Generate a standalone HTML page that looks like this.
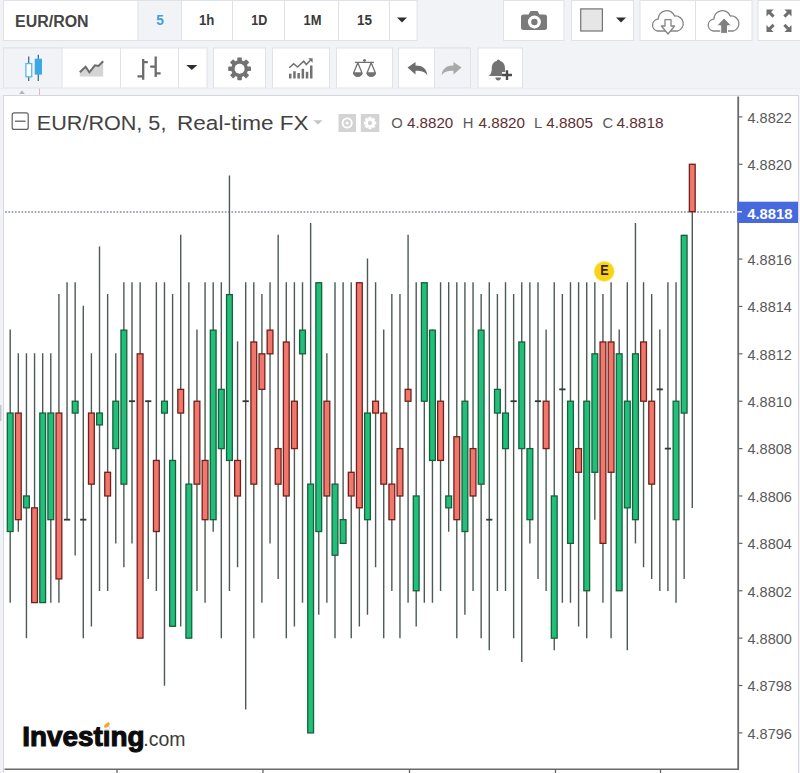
<!DOCTYPE html>
<html><head><meta charset="utf-8"><title>EUR/RON chart</title>
<style>
html,body{margin:0;padding:0;background:#f1f3f7;}
body{width:800px;height:773px;overflow:hidden;}
svg{display:block;}
text{font-family:"Liberation Sans",sans-serif;}
.ax{font-size:14.5px;fill:#595959;}
.tb{font-size:14.5px;font-weight:bold;fill:#3a3a3a;}
</style></head><body>
<svg width="800" height="773" viewBox="0 0 800 773">
<rect x="0" y="0" width="800" height="773" fill="#f1f3f7"/>

<!-- ===== toolbar row 1 ===== -->
<g stroke="#dfe2e9" stroke-width="1" fill="#fff">
<rect x="3.5" y="0.500" width="413.500" height="40"/>
<rect x="138" y="0.500" width="43.500" height="40" fill="#f1f3f7"/>
<line x1="232.5" y1="0" x2="232.5" y2="40"/>
<line x1="284.5" y1="0" x2="284.5" y2="40"/>
<line x1="338.5" y1="0" x2="338.5" y2="40"/>
<line x1="389.5" y1="0" x2="389.5" y2="40"/>
<rect x="503.500" y="0.500" width="60.500" height="40"/>
<rect x="571.500" y="0.500" width="62" height="40"/>
<rect x="640" y="0.500" width="112" height="40"/>
<line x1="695.5" y1="0" x2="695.5" y2="40"/>
<rect x="758" y="0.500" width="50" height="40"/>
</g>
<text x="15" y="26.800" font-size="16" font-weight="bold" fill="#454545" textLength="73.600" lengthAdjust="spacingAndGlyphs">EUR/RON</text>
<text x="156.3" y="24.6" class="tb" style="fill:#3fa0d6" textLength="7.6" lengthAdjust="spacingAndGlyphs">5</text>
<text x="199" y="24.6" class="tb" textLength="15.4" lengthAdjust="spacingAndGlyphs">1h</text>
<text x="251.2" y="24.6" class="tb" textLength="16" lengthAdjust="spacingAndGlyphs">1D</text>
<text x="303.5" y="24.6" class="tb" textLength="18" lengthAdjust="spacingAndGlyphs">1M</text>
<text x="356.9" y="24.6" class="tb" textLength="15" lengthAdjust="spacingAndGlyphs">15</text>
<path d="M397 17.5h10l-5 5z" fill="#2e2e2e"/>

<!-- camera -->
<g fill="#7a7a7a">
<path d="M523.5 14.5h5l2-3.5h7l2 3.5h5a2.5 2.5 0 0 1 2.5 2.5v10.5a2.5 2.5 0 0 1-2.5 2.5h-21a2.5 2.5 0 0 1-2.5-2.5V17a2.5 2.5 0 0 1 2.5-2.5z"/>
<circle cx="534.400" cy="22" r="6.500" fill="#fff"/>
<circle cx="534.400" cy="22" r="3.200"/>
</g>
<!-- colour square + arrow -->
<rect x="580.700" y="8.900" width="21.700" height="22.100" fill="#e6e6e6" stroke="#747474" stroke-width="1.200"/>
<path d="M616 17.5h10l-5 5z" fill="#2e2e2e"/>
<!-- cloud download -->
<g fill="none" stroke="#858585" stroke-width="1.300" stroke-linejoin="round">
<path d="M657.500 31A6 6 0 0 1 658.200 19.100A8.500 8.500 0 0 1 674.600 16A7.700 7.700 0 0 1 677.800 31z"/>
<path d="M665 19.600h6v6.400h3.600l-6.600 8l-6.600-8h3.600z" fill="#fff"/>
</g>
<!-- cloud upload -->
<g fill="none" stroke="#858585" stroke-width="1.300" stroke-linejoin="round" transform="translate(55.700 0)">
<path d="M657.500 31A6 6 0 0 1 658.200 19.100A8.500 8.500 0 0 1 674.600 16A7.700 7.700 0 0 1 677.800 31z"/>
<path d="M665 33.400v-7.600h-4l7.400-7.800l7.400 7.800h-4v7.600z" fill="#808080" stroke="#fff" stroke-width="1"/>
</g>
<!-- fullscreen arrows -->
<g fill="#6f6f6f">
<path d="M766.5 9.5h7l-2.4 2.4l3.6 3.6l-2.2 2.2l-3.6-3.6l-2.4 2.4z"/>
<path d="M791.5 9.5v7l-2.4-2.4l-3.6 3.6l-2.2-2.2l3.6-3.6l-2.4-2.4z"/>
<path d="M766.5 32v-7l2.4 2.4l3.6-3.6l2.2 2.2l-3.6 3.6l2.4 2.4z"/>
<path d="M791.5 32h-7l2.4-2.4l-3.6-3.6l2.2-2.2l3.6 3.6l2.4-2.4z"/>
</g>

<!-- ===== toolbar row 2 ===== -->
<g stroke="#dfe2e9" stroke-width="1" fill="#fff">
<rect x="3.5" y="48" width="203.5" height="40"/>
<rect x="3.5" y="48" width="58.5" height="40" fill="#f1f3f7"/>
<line x1="120.5" y1="48" x2="120.5" y2="88"/>
<line x1="178.5" y1="48" x2="178.5" y2="88"/>
<rect x="213.5" y="48" width="52" height="40"/>
<rect x="272.5" y="48" width="57" height="40"/>
<rect x="336.5" y="48" width="56" height="40"/>
<rect x="398.5" y="48" width="72" height="40"/>
<rect x="434.5" y="48" width="36" height="40" fill="#f1f3f7"/>
<rect x="478" y="48" width="44.5" height="40"/>
</g>
<!-- candle icon -->
<g stroke-width="1.300">
<line x1="28.700" y1="56.400" x2="28.700" y2="81" stroke="#3f6f8e"/>
<rect x="25.900" y="63.600" width="5.800" height="13.200" fill="#fff" stroke="#5bb8ea"/>
<line x1="38.300" y1="54.800" x2="38.300" y2="80.900" stroke="#3f6f8e"/>
<rect x="35.400" y="59.400" width="5.900" height="14.600" fill="#38a9e6" stroke="#38a9e6"/>
</g>
<!-- area/line icon -->
<path d="M79.800 76.600v-4.400l5.800-5.500l3.800 5.700l5.500-7.100l3.600 0.700l4.700-4.800v15.400z" fill="#d4d4d4"/>
<path d="M79.800 72.200l5.800-5.500l3.800 5.700l5.500-7.100l3.600 0.700l4.700-4.800" fill="none" stroke="#6b6b6b" stroke-width="2"/>
<!-- bars icon -->
<g stroke="#6b6b6b" stroke-width="2.300" fill="none">
<path d="M143.200 59.100v20.700M137.500 76.300h5.700M143.200 62.200h4.600"/>
<path d="M155.700 56.400v20.600M150.200 66.700h5.500M155.700 73.300h4.900"/>
</g>
<path d="M186.300 65h11l-5.500 5.100z" fill="#2e2e2e"/>
<!-- gear -->
<g transform="translate(239.600 68.800)">
<g fill="#727272">
<rect x="-2.300" y="-11.400" width="4.600" height="22.800" rx="0.800"/>
<rect x="-2.300" y="-11.400" width="4.600" height="22.800" rx="0.800" transform="rotate(45)"/>
<rect x="-2.300" y="-11.400" width="4.600" height="22.800" rx="0.800" transform="rotate(90)"/>
<rect x="-2.300" y="-11.400" width="4.600" height="22.800" rx="0.800" transform="rotate(135)"/>
<circle r="8.500"/>
</g>
<circle r="5" fill="#fff"/>
</g>
<!-- indicators -->
<g fill="#727272">
<rect x="289" y="73.700" width="2.500" height="4.800"/>
<rect x="293.200" y="71.200" width="2.500" height="7.300"/>
<rect x="297.400" y="73" width="2.500" height="5.500"/>
<rect x="301.600" y="68.800" width="2.500" height="9.700"/>
<rect x="305.800" y="71.800" width="2.500" height="6.700"/>
<rect x="310" y="65.500" width="2.500" height="13"/>
</g>
<path d="M289.300 67.700l4.400-4l3.800 3.300l6.200-5.800l2.600 3.300l4.600-4.800" fill="none" stroke="#727272" stroke-width="1.500"/>
<path d="M308.200 58.200h4.400v4.600z" fill="#727272"/>
<!-- scales -->
<g fill="none" stroke="#727272" stroke-width="1.300">
<path d="M355 62.400h19M364.500 60v2.400"/>
<path d="M357.800 62.800l-4.200 10.200h8.400zM371.200 62.800l-4.200 10.200h8.400z" stroke-linejoin="round"/>
</g>
<path d="M353 73h9.600a4.800 4 0 0 1-9.600 0zM366.400 73h9.600a4.800 4 0 0 1-9.600 0z" fill="#727272"/>
<circle cx="364.500" cy="60.300" r="1.400" fill="#727272"/>
<!-- undo / redo -->
<path d="M407.5 67.5l8-5.5v3.6c7 0 11.2 3.2 11.8 9.6c-2.6-3.4-6-4.5-11.8-4.4v3.7z" fill="#6d6d6d"/>
<path d="M461.5 67.5l-8-5.5v3.6c-7 0-11.2 3.2-11.8 9.6c2.600-3.400 6-4.500 11.800-4.400v3.700z" fill="#a9a9a9"/>
<!-- alert bell -->
<g fill="#737373">
<path d="M488.600 76c2.400-1.800 3.200-4.200 3.200-7.600c0-4.400 2.200-6.800 5-7.400a1.600 1.600 0 0 1 3.200 0c2.800 0.600 5 3 5 7.400c0 1.600 0.100 2.600 0.400 3.600h-3.400v4z"/>
<path d="M495.400 77.600h5.600a2.800 2.800 0 0 1-5.600 0z"/>
<path d="M505.800 70.200h2.400v3.600h3.800v2.400h-3.800v3.800h-2.400v-3.800h-3.800v-2.400h3.800z" fill="#4c4c4c"/>
</g>

<!-- ===== chart pane ===== -->
<rect x="3.500" y="95.500" width="795" height="690" fill="#fff" stroke="#d5d7dc" stroke-width="1"/>
<rect x="0" y="88.800" width="800" height="6.200" fill="#f4f5f9"/>
<line x1="0" y1="88.700" x2="800" y2="88.700" stroke="#eaecf0" stroke-width="1"/>
<path d="M19.200 94l2.800-3.800l2.800 3.800z" fill="#b4b6bb"/>
<line x1="39.500" y1="88.500" x2="39.500" y2="95" stroke="#e9b7bd" stroke-width="1"/>

<rect x="0" y="405" width="1.500" height="16" fill="#c4c6cb"/>
<!-- last price dotted line -->
<line x1="5.100" y1="211.900" x2="736" y2="211.900" stroke="#868b9c" stroke-width="1.500" stroke-dasharray="1.700 1.580"/>

<!-- candles -->
<line x1="10.20" y1="329.54" x2="10.20" y2="602.79" stroke="#4c5a53" stroke-width="1.4"/>
<rect x="7.30" y="413.06" width="5.80" height="118.46" fill="#22bf7b" stroke="#17603d" stroke-width="1.3"/>
<line x1="18.32" y1="353.23" x2="18.32" y2="531.72" stroke="#4c5a53" stroke-width="1.4"/>
<rect x="15.42" y="413.06" width="5.80" height="106.61" fill="#f1766c" stroke="#6e221b" stroke-width="1.3"/>
<line x1="26.44" y1="353.23" x2="26.44" y2="638.33" stroke="#4c5a53" stroke-width="1.4"/>
<rect x="23.54" y="495.98" width="5.80" height="11.85" fill="#22bf7b" stroke="#17603d" stroke-width="1.3"/>
<line x1="34.56" y1="353.23" x2="34.56" y2="602.79" stroke="#4c5a53" stroke-width="1.4"/>
<rect x="31.66" y="507.83" width="5.80" height="94.77" fill="#f1766c" stroke="#6e221b" stroke-width="1.3"/>
<line x1="42.68" y1="353.23" x2="42.68" y2="602.79" stroke="#4c5a53" stroke-width="1.4"/>
<rect x="39.78" y="413.06" width="5.80" height="189.54" fill="#22bf7b" stroke="#17603d" stroke-width="1.3"/>
<line x1="50.80" y1="353.23" x2="50.80" y2="602.79" stroke="#4c5a53" stroke-width="1.4"/>
<rect x="47.90" y="413.06" width="5.80" height="106.61" fill="#22bf7b" stroke="#17603d" stroke-width="1.3"/>
<line x1="58.92" y1="294.00" x2="58.92" y2="602.79" stroke="#4c5a53" stroke-width="1.4"/>
<rect x="56.02" y="413.06" width="5.80" height="165.84" fill="#f1766c" stroke="#6e221b" stroke-width="1.3"/>
<line x1="67.04" y1="282.15" x2="67.04" y2="519.87" stroke="#4c5a53" stroke-width="1.4"/>
<line x1="63.94" y1="519.67" x2="70.14" y2="519.67" stroke="#2f3a34" stroke-width="1.8"/>
<line x1="75.16" y1="282.15" x2="75.16" y2="555.41" stroke="#4c5a53" stroke-width="1.4"/>
<rect x="72.26" y="401.21" width="5.80" height="11.85" fill="#22bf7b" stroke="#17603d" stroke-width="1.3"/>
<line x1="83.28" y1="305.84" x2="83.28" y2="638.33" stroke="#4c5a53" stroke-width="1.4"/>
<line x1="80.18" y1="519.67" x2="86.38" y2="519.67" stroke="#2f3a34" stroke-width="1.8"/>
<line x1="91.40" y1="353.23" x2="91.40" y2="626.49" stroke="#4c5a53" stroke-width="1.4"/>
<rect x="88.50" y="413.06" width="5.80" height="71.08" fill="#f1766c" stroke="#6e221b" stroke-width="1.3"/>
<line x1="99.52" y1="246.61" x2="99.52" y2="590.95" stroke="#4c5a53" stroke-width="1.4"/>
<rect x="96.62" y="413.06" width="5.80" height="11.85" fill="#22bf7b" stroke="#17603d" stroke-width="1.3"/>
<line x1="107.64" y1="294.00" x2="107.64" y2="590.95" stroke="#4c5a53" stroke-width="1.4"/>
<rect x="104.74" y="472.29" width="5.80" height="23.69" fill="#f1766c" stroke="#6e221b" stroke-width="1.3"/>
<line x1="115.76" y1="353.23" x2="115.76" y2="543.56" stroke="#4c5a53" stroke-width="1.4"/>
<rect x="112.86" y="401.21" width="5.80" height="47.38" fill="#22bf7b" stroke="#17603d" stroke-width="1.3"/>
<line x1="123.88" y1="282.15" x2="123.88" y2="567.26" stroke="#4c5a53" stroke-width="1.4"/>
<rect x="120.98" y="330.14" width="5.80" height="154.00" fill="#22bf7b" stroke="#17603d" stroke-width="1.3"/>
<line x1="132.00" y1="282.15" x2="132.00" y2="543.56" stroke="#4c5a53" stroke-width="1.4"/>
<line x1="128.90" y1="401.21" x2="135.10" y2="401.21" stroke="#2f3a34" stroke-width="1.8"/>
<line x1="140.12" y1="282.15" x2="140.12" y2="638.33" stroke="#4c5a53" stroke-width="1.4"/>
<rect x="137.22" y="353.83" width="5.80" height="284.30" fill="#f1766c" stroke="#6e221b" stroke-width="1.3"/>
<line x1="148.24" y1="400.61" x2="148.24" y2="579.10" stroke="#4c5a53" stroke-width="1.4"/>
<line x1="145.14" y1="401.21" x2="151.34" y2="401.21" stroke="#2f3a34" stroke-width="1.8"/>
<line x1="156.36" y1="282.15" x2="156.36" y2="590.95" stroke="#4c5a53" stroke-width="1.4"/>
<rect x="153.46" y="460.44" width="5.80" height="71.08" fill="#f1766c" stroke="#6e221b" stroke-width="1.3"/>
<line x1="164.48" y1="282.15" x2="164.48" y2="685.72" stroke="#4c5a53" stroke-width="1.4"/>
<rect x="161.58" y="401.21" width="5.80" height="11.85" fill="#22bf7b" stroke="#17603d" stroke-width="1.3"/>
<line x1="172.60" y1="294.00" x2="172.60" y2="626.49" stroke="#4c5a53" stroke-width="1.4"/>
<rect x="169.70" y="460.44" width="5.80" height="165.84" fill="#22bf7b" stroke="#17603d" stroke-width="1.3"/>
<line x1="180.72" y1="234.77" x2="180.72" y2="626.49" stroke="#4c5a53" stroke-width="1.4"/>
<rect x="177.82" y="389.37" width="5.80" height="23.69" fill="#f1766c" stroke="#6e221b" stroke-width="1.3"/>
<line x1="188.84" y1="282.15" x2="188.84" y2="638.33" stroke="#4c5a53" stroke-width="1.4"/>
<rect x="185.94" y="484.13" width="5.80" height="154.00" fill="#22bf7b" stroke="#17603d" stroke-width="1.3"/>
<line x1="196.96" y1="329.54" x2="196.96" y2="590.95" stroke="#4c5a53" stroke-width="1.4"/>
<rect x="194.06" y="401.21" width="5.80" height="82.92" fill="#f1766c" stroke="#6e221b" stroke-width="1.3"/>
<line x1="205.08" y1="282.15" x2="205.08" y2="602.79" stroke="#4c5a53" stroke-width="1.4"/>
<rect x="202.18" y="460.44" width="5.80" height="59.23" fill="#f1766c" stroke="#6e221b" stroke-width="1.3"/>
<line x1="213.20" y1="282.15" x2="213.20" y2="531.72" stroke="#4c5a53" stroke-width="1.4"/>
<rect x="210.30" y="330.14" width="5.80" height="189.54" fill="#22bf7b" stroke="#17603d" stroke-width="1.3"/>
<line x1="221.32" y1="282.15" x2="221.32" y2="638.33" stroke="#4c5a53" stroke-width="1.4"/>
<rect x="218.42" y="389.37" width="5.80" height="59.23" fill="#22bf7b" stroke="#17603d" stroke-width="1.3"/>
<line x1="229.44" y1="175.54" x2="229.44" y2="590.95" stroke="#4c5a53" stroke-width="1.4"/>
<rect x="226.54" y="294.60" width="5.80" height="165.84" fill="#22bf7b" stroke="#17603d" stroke-width="1.3"/>
<line x1="237.56" y1="341.38" x2="237.56" y2="567.26" stroke="#4c5a53" stroke-width="1.4"/>
<rect x="234.66" y="460.44" width="5.80" height="35.54" fill="#f1766c" stroke="#6e221b" stroke-width="1.3"/>
<line x1="245.68" y1="282.15" x2="245.68" y2="709.41" stroke="#4c5a53" stroke-width="1.4"/>
<line x1="242.58" y1="401.21" x2="248.78" y2="401.21" stroke="#2f3a34" stroke-width="1.8"/>
<line x1="253.80" y1="282.15" x2="253.80" y2="638.33" stroke="#4c5a53" stroke-width="1.4"/>
<rect x="250.90" y="341.98" width="5.80" height="142.15" fill="#f1766c" stroke="#6e221b" stroke-width="1.3"/>
<line x1="261.92" y1="294.00" x2="261.92" y2="602.79" stroke="#4c5a53" stroke-width="1.4"/>
<rect x="259.02" y="353.83" width="5.80" height="35.54" fill="#f1766c" stroke="#6e221b" stroke-width="1.3"/>
<line x1="270.04" y1="282.15" x2="270.04" y2="543.56" stroke="#4c5a53" stroke-width="1.4"/>
<rect x="267.14" y="330.14" width="5.80" height="23.69" fill="#f1766c" stroke="#6e221b" stroke-width="1.3"/>
<line x1="278.16" y1="234.77" x2="278.16" y2="579.10" stroke="#4c5a53" stroke-width="1.4"/>
<rect x="275.26" y="448.60" width="5.80" height="35.54" fill="#f1766c" stroke="#6e221b" stroke-width="1.3"/>
<line x1="286.28" y1="282.15" x2="286.28" y2="638.33" stroke="#4c5a53" stroke-width="1.4"/>
<rect x="283.38" y="341.98" width="5.80" height="154.00" fill="#f1766c" stroke="#6e221b" stroke-width="1.3"/>
<line x1="294.40" y1="282.15" x2="294.40" y2="626.49" stroke="#4c5a53" stroke-width="1.4"/>
<rect x="291.50" y="401.21" width="5.80" height="47.38" fill="#f1766c" stroke="#6e221b" stroke-width="1.3"/>
<line x1="302.52" y1="282.15" x2="302.52" y2="602.79" stroke="#4c5a53" stroke-width="1.4"/>
<rect x="299.62" y="330.14" width="5.80" height="23.69" fill="#22bf7b" stroke="#17603d" stroke-width="1.3"/>
<line x1="310.64" y1="222.92" x2="310.64" y2="733.10" stroke="#4c5a53" stroke-width="1.4"/>
<rect x="307.74" y="484.13" width="5.80" height="248.77" fill="#22bf7b" stroke="#17603d" stroke-width="1.3"/>
<line x1="318.76" y1="282.15" x2="318.76" y2="614.64" stroke="#4c5a53" stroke-width="1.4"/>
<rect x="315.86" y="282.75" width="5.80" height="248.77" fill="#22bf7b" stroke="#17603d" stroke-width="1.3"/>
<line x1="326.88" y1="353.23" x2="326.88" y2="602.79" stroke="#4c5a53" stroke-width="1.4"/>
<rect x="323.98" y="401.21" width="5.80" height="94.77" fill="#f1766c" stroke="#6e221b" stroke-width="1.3"/>
<line x1="335.00" y1="282.15" x2="335.00" y2="638.33" stroke="#4c5a53" stroke-width="1.4"/>
<rect x="332.10" y="484.13" width="5.80" height="71.08" fill="#22bf7b" stroke="#17603d" stroke-width="1.3"/>
<line x1="343.12" y1="282.15" x2="343.12" y2="543.56" stroke="#4c5a53" stroke-width="1.4"/>
<rect x="340.22" y="519.67" width="5.80" height="23.69" fill="#22bf7b" stroke="#17603d" stroke-width="1.3"/>
<line x1="351.24" y1="282.15" x2="351.24" y2="638.33" stroke="#4c5a53" stroke-width="1.4"/>
<rect x="348.34" y="472.29" width="5.80" height="23.69" fill="#f1766c" stroke="#6e221b" stroke-width="1.3"/>
<line x1="359.36" y1="282.15" x2="359.36" y2="626.49" stroke="#4c5a53" stroke-width="1.4"/>
<rect x="356.46" y="282.75" width="5.80" height="225.07" fill="#f1766c" stroke="#6e221b" stroke-width="1.3"/>
<line x1="367.48" y1="258.46" x2="367.48" y2="614.64" stroke="#4c5a53" stroke-width="1.4"/>
<rect x="364.58" y="413.06" width="5.80" height="106.61" fill="#22bf7b" stroke="#17603d" stroke-width="1.3"/>
<line x1="375.60" y1="282.15" x2="375.60" y2="567.26" stroke="#4c5a53" stroke-width="1.4"/>
<rect x="372.70" y="401.21" width="5.80" height="11.85" fill="#f1766c" stroke="#6e221b" stroke-width="1.3"/>
<line x1="383.72" y1="329.54" x2="383.72" y2="638.33" stroke="#4c5a53" stroke-width="1.4"/>
<rect x="380.82" y="413.06" width="5.80" height="71.08" fill="#f1766c" stroke="#6e221b" stroke-width="1.3"/>
<line x1="391.84" y1="294.00" x2="391.84" y2="590.95" stroke="#4c5a53" stroke-width="1.4"/>
<rect x="388.94" y="484.13" width="5.80" height="35.54" fill="#f1766c" stroke="#6e221b" stroke-width="1.3"/>
<line x1="399.96" y1="294.00" x2="399.96" y2="638.33" stroke="#4c5a53" stroke-width="1.4"/>
<rect x="397.06" y="448.60" width="5.80" height="47.38" fill="#f1766c" stroke="#6e221b" stroke-width="1.3"/>
<line x1="408.08" y1="234.77" x2="408.08" y2="602.79" stroke="#4c5a53" stroke-width="1.4"/>
<rect x="405.18" y="389.37" width="5.80" height="11.85" fill="#f1766c" stroke="#6e221b" stroke-width="1.3"/>
<line x1="416.20" y1="282.15" x2="416.20" y2="626.49" stroke="#4c5a53" stroke-width="1.4"/>
<rect x="413.30" y="495.98" width="5.80" height="94.77" fill="#22bf7b" stroke="#17603d" stroke-width="1.3"/>
<line x1="424.32" y1="282.15" x2="424.32" y2="602.79" stroke="#4c5a53" stroke-width="1.4"/>
<rect x="421.42" y="282.75" width="5.80" height="118.46" fill="#22bf7b" stroke="#17603d" stroke-width="1.3"/>
<line x1="432.44" y1="329.54" x2="432.44" y2="602.79" stroke="#4c5a53" stroke-width="1.4"/>
<rect x="429.54" y="330.14" width="5.80" height="130.31" fill="#22bf7b" stroke="#17603d" stroke-width="1.3"/>
<line x1="440.56" y1="282.15" x2="440.56" y2="590.95" stroke="#4c5a53" stroke-width="1.4"/>
<rect x="437.66" y="401.21" width="5.80" height="59.23" fill="#f1766c" stroke="#6e221b" stroke-width="1.3"/>
<line x1="448.68" y1="282.15" x2="448.68" y2="531.72" stroke="#4c5a53" stroke-width="1.4"/>
<rect x="445.78" y="495.98" width="5.80" height="11.85" fill="#22bf7b" stroke="#17603d" stroke-width="1.3"/>
<line x1="456.80" y1="282.15" x2="456.80" y2="638.33" stroke="#4c5a53" stroke-width="1.4"/>
<rect x="453.90" y="436.75" width="5.80" height="82.92" fill="#f1766c" stroke="#6e221b" stroke-width="1.3"/>
<line x1="464.92" y1="282.15" x2="464.92" y2="614.64" stroke="#4c5a53" stroke-width="1.4"/>
<rect x="462.02" y="401.21" width="5.80" height="130.31" fill="#22bf7b" stroke="#17603d" stroke-width="1.3"/>
<line x1="473.04" y1="282.15" x2="473.04" y2="590.95" stroke="#4c5a53" stroke-width="1.4"/>
<rect x="470.14" y="448.60" width="5.80" height="47.38" fill="#f1766c" stroke="#6e221b" stroke-width="1.3"/>
<line x1="481.16" y1="294.00" x2="481.16" y2="638.33" stroke="#4c5a53" stroke-width="1.4"/>
<rect x="478.26" y="330.14" width="5.80" height="154.00" fill="#22bf7b" stroke="#17603d" stroke-width="1.3"/>
<line x1="489.28" y1="282.15" x2="489.28" y2="650.18" stroke="#4c5a53" stroke-width="1.4"/>
<line x1="486.18" y1="519.67" x2="492.38" y2="519.67" stroke="#2f3a34" stroke-width="1.8"/>
<line x1="497.40" y1="294.00" x2="497.40" y2="590.95" stroke="#4c5a53" stroke-width="1.4"/>
<rect x="494.50" y="389.37" width="5.80" height="23.69" fill="#22bf7b" stroke="#17603d" stroke-width="1.3"/>
<line x1="505.52" y1="282.15" x2="505.52" y2="590.95" stroke="#4c5a53" stroke-width="1.4"/>
<rect x="502.62" y="413.06" width="5.80" height="35.54" fill="#22bf7b" stroke="#17603d" stroke-width="1.3"/>
<line x1="513.64" y1="294.00" x2="513.64" y2="638.33" stroke="#4c5a53" stroke-width="1.4"/>
<line x1="510.54" y1="401.21" x2="516.74" y2="401.21" stroke="#2f3a34" stroke-width="1.8"/>
<line x1="521.76" y1="282.15" x2="521.76" y2="662.02" stroke="#4c5a53" stroke-width="1.4"/>
<rect x="518.86" y="341.98" width="5.80" height="106.61" fill="#22bf7b" stroke="#17603d" stroke-width="1.3"/>
<line x1="529.88" y1="282.15" x2="529.88" y2="543.56" stroke="#4c5a53" stroke-width="1.4"/>
<rect x="526.98" y="448.60" width="5.80" height="71.08" fill="#22bf7b" stroke="#17603d" stroke-width="1.3"/>
<line x1="538.00" y1="282.15" x2="538.00" y2="579.10" stroke="#4c5a53" stroke-width="1.4"/>
<line x1="534.90" y1="401.21" x2="541.10" y2="401.21" stroke="#2f3a34" stroke-width="1.8"/>
<line x1="546.12" y1="329.54" x2="546.12" y2="590.95" stroke="#4c5a53" stroke-width="1.4"/>
<rect x="543.22" y="401.21" width="5.80" height="47.38" fill="#f1766c" stroke="#6e221b" stroke-width="1.3"/>
<line x1="554.24" y1="282.15" x2="554.24" y2="650.18" stroke="#4c5a53" stroke-width="1.4"/>
<rect x="551.34" y="495.98" width="5.80" height="142.15" fill="#22bf7b" stroke="#17603d" stroke-width="1.3"/>
<line x1="562.36" y1="294.00" x2="562.36" y2="602.79" stroke="#4c5a53" stroke-width="1.4"/>
<line x1="559.26" y1="389.37" x2="565.46" y2="389.37" stroke="#2f3a34" stroke-width="1.8"/>
<line x1="570.48" y1="282.15" x2="570.48" y2="602.79" stroke="#4c5a53" stroke-width="1.4"/>
<rect x="567.58" y="401.21" width="5.80" height="142.15" fill="#22bf7b" stroke="#17603d" stroke-width="1.3"/>
<line x1="578.60" y1="282.15" x2="578.60" y2="626.49" stroke="#4c5a53" stroke-width="1.4"/>
<rect x="575.70" y="448.60" width="5.80" height="23.69" fill="#f1766c" stroke="#6e221b" stroke-width="1.3"/>
<line x1="586.72" y1="282.15" x2="586.72" y2="638.33" stroke="#4c5a53" stroke-width="1.4"/>
<rect x="583.82" y="401.21" width="5.80" height="189.54" fill="#22bf7b" stroke="#17603d" stroke-width="1.3"/>
<line x1="594.84" y1="282.15" x2="594.84" y2="519.87" stroke="#4c5a53" stroke-width="1.4"/>
<rect x="591.94" y="353.83" width="5.80" height="118.46" fill="#22bf7b" stroke="#17603d" stroke-width="1.3"/>
<line x1="602.96" y1="294.00" x2="602.96" y2="602.79" stroke="#4c5a53" stroke-width="1.4"/>
<rect x="600.06" y="341.98" width="5.80" height="201.38" fill="#f1766c" stroke="#6e221b" stroke-width="1.3"/>
<line x1="611.08" y1="282.15" x2="611.08" y2="638.33" stroke="#4c5a53" stroke-width="1.4"/>
<rect x="608.18" y="341.98" width="5.80" height="130.31" fill="#f1766c" stroke="#6e221b" stroke-width="1.3"/>
<line x1="619.20" y1="329.54" x2="619.20" y2="590.95" stroke="#4c5a53" stroke-width="1.4"/>
<rect x="616.30" y="353.83" width="5.80" height="236.92" fill="#22bf7b" stroke="#17603d" stroke-width="1.3"/>
<line x1="627.32" y1="282.15" x2="627.32" y2="650.18" stroke="#4c5a53" stroke-width="1.4"/>
<rect x="624.42" y="401.21" width="5.80" height="106.61" fill="#22bf7b" stroke="#17603d" stroke-width="1.3"/>
<line x1="635.44" y1="222.92" x2="635.44" y2="543.56" stroke="#4c5a53" stroke-width="1.4"/>
<rect x="632.54" y="353.83" width="5.80" height="165.84" fill="#22bf7b" stroke="#17603d" stroke-width="1.3"/>
<line x1="643.56" y1="282.15" x2="643.56" y2="567.26" stroke="#4c5a53" stroke-width="1.4"/>
<rect x="640.66" y="341.98" width="5.80" height="59.23" fill="#f1766c" stroke="#6e221b" stroke-width="1.3"/>
<line x1="651.68" y1="294.00" x2="651.68" y2="579.10" stroke="#4c5a53" stroke-width="1.4"/>
<rect x="648.78" y="401.21" width="5.80" height="82.92" fill="#f1766c" stroke="#6e221b" stroke-width="1.3"/>
<line x1="659.80" y1="329.54" x2="659.80" y2="590.95" stroke="#4c5a53" stroke-width="1.4"/>
<line x1="656.70" y1="389.37" x2="662.90" y2="389.37" stroke="#2f3a34" stroke-width="1.8"/>
<line x1="667.92" y1="282.15" x2="667.92" y2="590.95" stroke="#4c5a53" stroke-width="1.4"/>
<line x1="664.82" y1="448.60" x2="671.02" y2="448.60" stroke="#2f3a34" stroke-width="1.8"/>
<line x1="676.04" y1="282.15" x2="676.04" y2="602.79" stroke="#4c5a53" stroke-width="1.4"/>
<rect x="673.14" y="401.21" width="5.80" height="118.46" fill="#22bf7b" stroke="#17603d" stroke-width="1.3"/>
<line x1="684.16" y1="234.77" x2="684.16" y2="579.10" stroke="#4c5a53" stroke-width="1.4"/>
<rect x="681.26" y="235.37" width="5.80" height="177.69" fill="#22bf7b" stroke="#17603d" stroke-width="1.3"/>
<line x1="692.28" y1="163.69" x2="692.28" y2="508.03" stroke="#4c5a53" stroke-width="1.4"/>
<rect x="689.38" y="164.29" width="5.80" height="47.38" fill="#f1766c" stroke="#6e221b" stroke-width="1.3"/>

<!-- E marker -->
<circle cx="604.200" cy="271.400" r="10.400" fill="#fbe66a"/>
<circle cx="604.200" cy="271.400" r="9.500" fill="#f8d417"/>
<text x="600.300" y="274.900" font-size="15.400" font-weight="bold" fill="#3d1f08" textLength="8.400" lengthAdjust="spacingAndGlyphs">E</text>

<!-- legend -->
<rect x="12.200" y="112.800" width="16" height="16.600" rx="2" fill="#fff" stroke="#606060" stroke-width="1.200"/>
<line x1="15" y1="121.200" x2="25.500" y2="121.200" stroke="#606060" stroke-width="1.300"/>
<text x="36.800" y="130.100" font-size="19.300" fill="#424242" textLength="129.600" lengthAdjust="spacingAndGlyphs">EUR/RON, 5,</text>
<text x="177" y="130.100" font-size="19.300" fill="#424242" textLength="131.600" lengthAdjust="spacingAndGlyphs">Real-time FX</text>
<path d="M313.400 120.200h9.200l-4.600 4.400z" fill="#c4c4c4"/>
<rect x="338.500" y="114" width="17.500" height="18" fill="#d3d3d3"/>
<circle cx="347.200" cy="123" r="4.600" fill="none" stroke="#fff" stroke-width="1.800"/>
<circle cx="347.200" cy="123" r="1.600" fill="#fff"/>
<rect x="360.800" y="114" width="18.500" height="18" fill="#d3d3d3"/>
<g transform="translate(370 123)">
<g fill="#fff">
<rect x="-1.500" y="-6.200" width="3" height="12.400"/>
<rect x="-1.500" y="-6.200" width="3" height="12.400" transform="rotate(45)"/>
<rect x="-1.500" y="-6.200" width="3" height="12.400" transform="rotate(90)"/>
<rect x="-1.500" y="-6.200" width="3" height="12.400" transform="rotate(135)"/>
<circle r="4.600"/>
</g>
<circle r="2.200" fill="#d3d3d3"/>
</g>
<g font-size="14.800">
<text x="391.200" y="128" fill="#5a5a5a">O</text>
<text x="407" y="128" fill="#5c3030" textLength="46.200" lengthAdjust="spacingAndGlyphs">4.8820</text>
<text x="462.800" y="128" fill="#5a5a5a">H</text>
<text x="478.500" y="128" fill="#5c3030" textLength="46.500" lengthAdjust="spacingAndGlyphs">4.8820</text>
<text x="534" y="128" fill="#5a5a5a">L</text>
<text x="546.300" y="128" fill="#5c3030" textLength="46.600" lengthAdjust="spacingAndGlyphs">4.8805</text>
<text x="602.600" y="128" fill="#5a5a5a">C</text>
<text x="616.400" y="128" fill="#5c3030" textLength="47.200" lengthAdjust="spacingAndGlyphs">4.8818</text>
</g>

<!-- logo -->
<text x="22.200" y="745.600" font-size="28" font-weight="bold" fill="#0b0b0b" textLength="122.400" lengthAdjust="spacingAndGlyphs" stroke="#0b0b0b" stroke-width="1.100">Investing</text>
<rect x="102" y="723.500" width="7.500" height="5.900" fill="#fff"/>
<path d="M104 727.600l0.400-2.600l3.800-3l1.800 1.400l-1.600 3.400l-2.600 1z" fill="#f5a81f"/>
<text x="143.300" y="745.800" font-size="19.500" fill="#3a3a3a" textLength="42.200" lengthAdjust="spacingAndGlyphs">.com</text>

<!-- axes -->
<line x1="738.200" y1="96.500" x2="738.200" y2="770" stroke="#6a6a6a" stroke-width="1.800"/>
<line x1="4.500" y1="769.300" x2="739" y2="769.300" stroke="#6a6a6a" stroke-width="1.500"/>
<line x1="117" y1="769" x2="117" y2="773" stroke="#666" stroke-width="1.3"/><line x1="263" y1="769" x2="263" y2="773" stroke="#666" stroke-width="1.3"/><line x1="409.5" y1="769" x2="409.5" y2="773" stroke="#666" stroke-width="1.3"/><line x1="555.5" y1="769" x2="555.5" y2="773" stroke="#666" stroke-width="1.3"/><line x1="660.5" y1="769" x2="660.5" y2="773" stroke="#666" stroke-width="1.3"/>
<line x1="738.2" y1="732.90" x2="742.5" y2="732.90" stroke="#666" stroke-width="1.2"/>
<text x="747.5" y="738.70" class="ax" textLength="44.3" lengthAdjust="spacingAndGlyphs">4.8796</text>
<line x1="738.2" y1="685.52" x2="742.5" y2="685.52" stroke="#666" stroke-width="1.2"/>
<text x="747.5" y="691.32" class="ax" textLength="44.3" lengthAdjust="spacingAndGlyphs">4.8798</text>
<line x1="738.2" y1="638.13" x2="742.5" y2="638.13" stroke="#666" stroke-width="1.2"/>
<text x="747.5" y="643.93" class="ax" textLength="44.3" lengthAdjust="spacingAndGlyphs">4.8800</text>
<line x1="738.2" y1="590.75" x2="742.5" y2="590.75" stroke="#666" stroke-width="1.2"/>
<text x="747.5" y="596.55" class="ax" textLength="44.3" lengthAdjust="spacingAndGlyphs">4.8802</text>
<line x1="738.2" y1="543.36" x2="742.5" y2="543.36" stroke="#666" stroke-width="1.2"/>
<text x="747.5" y="549.16" class="ax" textLength="44.3" lengthAdjust="spacingAndGlyphs">4.8804</text>
<line x1="738.2" y1="495.98" x2="742.5" y2="495.98" stroke="#666" stroke-width="1.2"/>
<text x="747.5" y="501.78" class="ax" textLength="44.3" lengthAdjust="spacingAndGlyphs">4.8806</text>
<line x1="738.2" y1="448.60" x2="742.5" y2="448.60" stroke="#666" stroke-width="1.2"/>
<text x="747.5" y="454.40" class="ax" textLength="44.3" lengthAdjust="spacingAndGlyphs">4.8808</text>
<line x1="738.2" y1="401.21" x2="742.5" y2="401.21" stroke="#666" stroke-width="1.2"/>
<text x="747.5" y="407.01" class="ax" textLength="44.3" lengthAdjust="spacingAndGlyphs">4.8810</text>
<line x1="738.2" y1="353.83" x2="742.5" y2="353.83" stroke="#666" stroke-width="1.2"/>
<text x="747.5" y="359.63" class="ax" textLength="44.3" lengthAdjust="spacingAndGlyphs">4.8812</text>
<line x1="738.2" y1="306.44" x2="742.5" y2="306.44" stroke="#666" stroke-width="1.2"/>
<text x="747.5" y="312.24" class="ax" textLength="44.3" lengthAdjust="spacingAndGlyphs">4.8814</text>
<line x1="738.2" y1="259.06" x2="742.5" y2="259.06" stroke="#666" stroke-width="1.2"/>
<text x="747.5" y="264.86" class="ax" textLength="44.3" lengthAdjust="spacingAndGlyphs">4.8816</text>
<line x1="738.2" y1="211.68" x2="742.5" y2="211.68" stroke="#666" stroke-width="1.2"/>
<line x1="738.2" y1="164.29" x2="742.5" y2="164.29" stroke="#666" stroke-width="1.2"/>
<text x="747.5" y="170.09" class="ax" textLength="44.3" lengthAdjust="spacingAndGlyphs">4.8820</text>
<line x1="738.2" y1="116.91" x2="742.5" y2="116.91" stroke="#666" stroke-width="1.2"/>
<text x="747.5" y="122.71" class="ax" textLength="44.3" lengthAdjust="spacingAndGlyphs">4.8822</text>
<rect x="737.300" y="201.700" width="60.700" height="21.300" fill="#4669de"/>
<line x1="737.300" y1="211.800" x2="742" y2="211.800" stroke="#fff" stroke-width="1.300"/>
<text x="747.200" y="218.800" font-size="14.800" font-weight="bold" fill="#fff" textLength="45.300" lengthAdjust="spacingAndGlyphs">4.8818</text>
</svg>
</body></html>
